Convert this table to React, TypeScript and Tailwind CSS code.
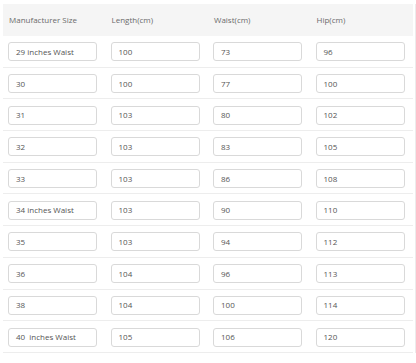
import React from "react";

const rows: string[][] = [
  ["29 inches Waist", "100", "73", "96"],
  ["30", "100", "77", "100"],
  ["31", "103", "80", "102"],
  ["32", "103", "83", "105"],
  ["33", "103", "86", "108"],
  ["34 inches Waist", "103", "90", "110"],
  ["35", "103", "94", "112"],
  ["36", "104", "96", "113"],
  ["38", "104", "100", "114"],
  ["40  inches Waist", "105", "106", "120"],
];

const headers = ["Manufacturer Size", "Length(cm)", "Waist(cm)", "Hip(cm)"];

export default function App() {
  return (
    <div
      className="w-[416px] h-[363px] bg-white pt-[4px] pl-[3px] text-[8px] text-[#666]"
      style={{ fontFamily: '"Open Sans", "Liberation Sans", sans-serif' }}
    >
      <div className="w-[413px] border-r border-[#ececec]">
        <div className="w-[410px] grid grid-cols-4 h-[32px] bg-[#f5f5f5] items-center">
          {headers.map((h) => (
            <div key={h} className="pl-[6px] text-[#6b6b6b]">
              {h}
            </div>
          ))}
        </div>
        {rows.map((r, i) => (
          <div
            key={i}
            className="w-[410px] grid grid-cols-4 h-[31.7px] items-center border-b border-[#ededed]"
          >
            {r.map((v, j) => (
              <div key={j} className="pl-[5px] pt-[1px]">
                <div className="w-[89px] h-[19px] border border-[#d9d9d9] rounded-[3px] pl-[7px] flex items-center text-[#555] whitespace-pre">
                  {v}
                </div>
              </div>
            ))}
          </div>
        ))}
      </div>
    </div>
  );
}
